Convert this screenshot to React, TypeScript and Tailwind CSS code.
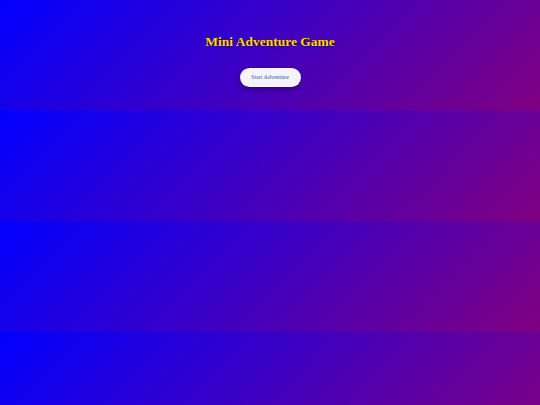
export default function App() {
  return (
    <div className="min-h-screen bg-[linear-gradient(135deg,#0000ff,#800080)] bg-[length:100%_110.67px] font-['Liberation_Serif',serif]">
      <div className="flex flex-col items-center pt-[35px]">
        <h1 className="text-[13.5px] font-bold leading-none text-[#ffd700] [text-shadow:1px_1px_2px_rgba(0,0,0,0.6)]">
          Mini Adventure Game
        </h1>
        <button
          type="button"
          className="mt-[19px] h-[19px] w-[61px] rounded-full bg-[#f4f4fa] text-[6px] text-[#2f5aa8] shadow-[0_2px_5px_rgba(0,0,0,0.35)]"
        >
          Start Adventure
        </button>
      </div>
    </div>
  );
}
